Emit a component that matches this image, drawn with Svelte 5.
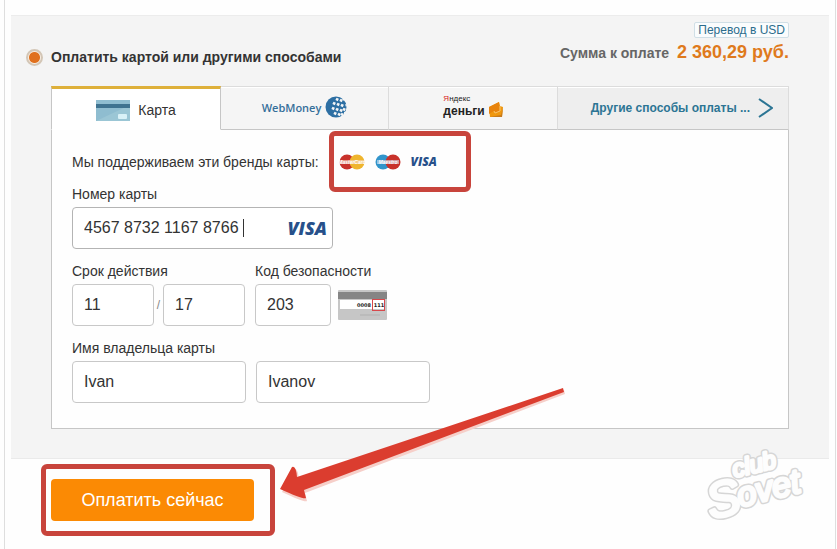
<script lang="ts">
  let method = 'card';
  let cardNumber = '4567 8732 1167 8766';
  let month = '11';
  let year = '17';
  let code = '203';
  let firstName = 'Ivan';
  let lastName = 'Ivanov';

  // openings in the WebMoney globe
  const globeDots = [
    [12, 3], [16, 4], [9, 7], [13, 8], [17, 9], [8, 12], [12, 13],
    [16, 14], [19, 13], [10, 17], [14, 18], [17, 18],
  ];
</script>

<div class="page">
  <main class="panel">
    <header class="summary">
      <label class="choice">
        <input type="radio" name="payment" value="other" checked />
        <span>Оплатить картой или другими способами</span>
      </label>

      <div class="total">
        <a class="currency" href="#usd">Перевод в USD</a>
        <p class="sum">Сумма к оплате <strong>2 360,29 руб.</strong></p>
      </div>
    </header>

    <section class="methods">
      <div class="tabs" role="tablist">
        <button class="tab" class:active={method === 'card'} role="tab" aria-selected={method === 'card'} on:click={() => (method = 'card')}>
          <svg class="card-icon" viewBox="0 0 34 21" aria-hidden="true">
            <rect width="34" height="21" fill="#8fbdd0" />
            <path d="M0 21 L34 5 V21 Z" fill="#a3cbd9" opacity="0.6" />
            <rect y="4" width="34" height="4" fill="#3f7390" />
            <rect x="22" y="14" width="9" height="5" rx="1" fill="#d9f1f7" />
          </svg>
          <span>Карта</span>
        </button>

        <button class="tab webmoney" class:active={method === 'webmoney'} role="tab" aria-selected={method === 'webmoney'} on:click={() => (method = 'webmoney')}>
          <span>WebMoney</span>
          <svg class="globe" viewBox="0 0 22 22" aria-hidden="true">
            <circle cx="11" cy="11" r="10.5" fill="#2d6fa3" />
            <g fill="#f4f5f6">
              {#each globeDots as [x, y]}
                <rect x={x - 1} y={y - 1} width="2.6" height="2.6" transform="rotate(25 {x} {y})" />
              {/each}
            </g>
            <path d="M17 3 L20 2 L19 5 Z M20 8 L22 9 L21 11 Z M19 16 L22 15 L19 20 Z" fill="#f5f5f5" />
          </svg>
        </button>

        <button class="tab yandex" class:active={method === 'yandex'} role="tab" aria-selected={method === 'yandex'} on:click={() => (method = 'yandex')}>
          <span class="yandex-name">
            <small><i>Я</i>ндекс</small>
            <b>деньги</b>
          </span>
          <svg class="wallet" viewBox="0 0 14 16" aria-hidden="true">
            <path d="M0 5 L10 0 L11 4 L14 5 L13 15 L1 15 Z" fill="#f0980f" />
            <path d="M0 5 L10 0 L11 9 L6 11 L5 9 L0 12 Z" fill="#e8830c" />
            <path d="M5 9 L6 11 L11 9 V4" fill="none" stroke="#f8c46c" stroke-width="1" />
            <path d="M1 15 L13 15 L14 5 L12 13 Z" fill="#c77a1c" />
          </svg>
        </button>

        <button class="tab others" class:active={method === 'others'} role="tab" aria-selected={method === 'others'} on:click={() => (method = 'others')}>
          <span>Другие способы оплаты ...</span>
          <svg class="chevron" viewBox="0 0 15 20" aria-hidden="true">
            <path d="M1 1 L14 10 L1 19" fill="none" stroke="#2c7594" stroke-width="2" />
          </svg>
        </button>
      </div>

      <form id="card-form" class="card-form" on:submit|preventDefault>
        <div class="brands">
          <span>Мы поддерживаем эти бренды карты:</span>
          <div class="logos">
            <svg class="circles" viewBox="0 0 26 16" role="img" aria-label="MasterCard">
              <circle cx="8" cy="8" r="7.5" fill="#c8322b" />
              <circle cx="18" cy="8" r="7.5" fill="#efb52e" />
              <path d="M1 8 H25" stroke="#f7d9c4" stroke-width="4" opacity="0.6" />
              <text x="13" y="10" text-anchor="middle" fill="#fff">MasterCard</text>
            </svg>
            <svg class="circles" viewBox="0 0 26 16" role="img" aria-label="Maestro">
              <circle cx="8" cy="8" r="7.5" fill="#3295cb" />
              <circle cx="18" cy="8" r="7.5" fill="#c8322b" />
              <path d="M2 8 H24" stroke="#d9dfee" stroke-width="4" opacity="0.6" />
              <text x="13" y="10" text-anchor="middle" fill="#fff">Maestro</text>
            </svg>
            <span class="visa small">VISA</span>
            <span class="highlight" aria-hidden="true"></span>
          </div>
        </div>

        <div class="field">
          <label for="number">Номер карты</label>
          <div class="number-box">
            <input id="number" bind:value={cardNumber} />
            <span class="caret"></span>
            <span class="visa">VISA</span>
          </div>
        </div>

        <div class="row">
          <div class="field">
            <label for="month">Срок действия</label>
            <div class="expiry">
              <input id="month" class="box" bind:value={month} />
              <span>/</span>
              <input class="box" aria-label="Год" bind:value={year} />
            </div>
          </div>
          <div class="field">
            <label for="code">Код безопасности</label>
            <div class="security">
              <input id="code" class="box" bind:value={code} />
              <svg class="card-back" viewBox="0 0 49 30" aria-hidden="true">
                <rect width="49" height="30" rx="1" fill="#c6c6c6" />
                <rect y="2" width="49" height="7" fill="#858585" />
                <rect x="2" y="10" width="45" height="9" fill="#fff" />
                <text x="33" y="17" text-anchor="end">0008</text>
                <text x="41" y="17" text-anchor="middle">111</text>
                <rect x="34.5" y="9.5" width="12" height="11" fill="none" stroke="#d8484c" />
                <path d="M22 25 H42" stroke="#b0b0b0" />
              </svg>
            </div>
          </div>
        </div>

        <div class="field">
          <label for="first-name">Имя владельца карты</label>
          <div class="row">
            <input id="first-name" class="box name" bind:value={firstName} />
            <input class="box name" aria-label="Фамилия" bind:value={lastName} />
          </div>
        </div>
      </form>
    </section>
  </main>

  <footer class="actions">
    <div class="pay-area">
      <button class="pay" type="submit" form="card-form">Оплатить сейчас</button>
      <svg class="arrow" viewBox="0 0 288 114" aria-hidden="true">
        <path d="M1 103 L14 80 Q17 80 18 91 L283 1 L284 5 L24 104 L26 112 Q24 114 1 103 Z" fill="#f6cfc9" transform="translate(1 2)" />
        <path d="M0 102 L12 80 Q16 78 17 90 L283 1 L284 5 L24 103 L26 111 Q24 113 0 102 Z" fill="#db3d2f" />
      </svg>
    </div>
  </footer>

  <svg class="watermark" viewBox="0 0 110 80" aria-hidden="true">
    <g transform="rotate(-14 55 40)">
      <g class="edge">
        <text x="4" y="67" class="big">S</text>
        <text x="35" y="62" class="mid">ovet</text>
        <text x="37" y="32" class="top">club</text>
      </g>
      <g class="fill">
        <text x="4" y="67" class="big">S</text>
        <text x="35" y="62" class="mid">ovet</text>
        <text x="37" y="32" class="top">club</text>
      </g>
    </g>
  </svg>
</div>

<style>
  :global(body) {
    margin: 0;
    background: #fefefe;
  }

  .page {
    position: relative;
    box-sizing: border-box;
    min-height: 100vh;
    margin: 0 1px 0 4px;
    padding: 15px 6px 12px;
    border-left: 1px solid #dedede;
    border-right: 1px solid #dedede;
    font-family: "Liberation Sans", Arial, sans-serif;
    font-size: 14px;
    line-height: 18px;
    color: #333;
  }

  button, input {
    font-family: inherit;
    color: inherit;
  }

  .panel {
    padding: 6px 40px 29px;
    border-top: 1px solid #ececec;
    border-bottom: 1px solid #eaeaea;
    background: #f4f4f4;
  }

  .summary {
    display: flex;
    justify-content: space-between;
    height: 64px;
  }

  .choice {
    display: flex;
    align-items: center;
    gap: 8px;
    height: 18px;
    margin: 26px 0 0 -25px;
    font-weight: bold;
    white-space: nowrap;
  }

  .choice input {
    appearance: none;
    box-sizing: border-box;
    width: 17px;
    height: 17px;
    margin: 0;
    border: 2px solid #d3c6b6;
    border-radius: 50%;
    background: radial-gradient(circle, #e0701e 0 5px, #f9eee2 6px);
  }

  .total {
    display: flex;
    flex-direction: column;
    align-items: flex-end;
  }

  .currency {
    padding: 0 3px;
    border: 1px solid #d0dfe6;
    border-radius: 2px;
    background: #fafcfd;
    font-size: 12px;
    line-height: 14px;
    color: #2b6c8c;
    text-decoration: none;
  }

  .sum {
    margin: 4px 0 0;
    font-weight: bold;
    line-height: 20px;
    color: #666;
    white-space: nowrap;
  }

  .sum strong {
    margin-left: 4px;
    font-size: 18px;
    color: #df7a1c;
  }

  .tabs {
    display: grid;
    grid-template-columns: 170fr 168fr 169fr 231fr;
    height: 44px;
  }

  .tab {
    display: flex;
    align-items: center;
    justify-content: center;
    padding: 0;
    border: 0;
    border-top: 1px solid #dcdcdc;
    border-right: 1px solid #dcdcdc;
    border-bottom: 1px solid #c6c6c6;
    background: #f5f5f5;
    box-shadow: inset 0 1px #fff;
    font-size: 14px;
    cursor: pointer;
  }

  .tab.active {
    gap: 8px;
    padding: 2px 0 0;
    border-top: 3px solid #deb03a;
    border-left: 1px solid #c6c6c6;
    border-right-color: #c6c6c6;
    border-bottom-color: #fff;
    background: #fff;
    box-shadow: none;
  }

  .card-icon {
    width: 34px;
    height: 21px;
  }

  .webmoney {
    gap: 4px;
    padding-bottom: 2px;
    font-family: "Open Sans", sans-serif;
    font-size: 11px;
    font-weight: 600;
    color: #356f9a;
  }

  .globe {
    width: 22px;
    height: 22px;
  }

  .yandex {
    gap: 4px;
    padding-bottom: 4px;
  }

  .yandex-name {
    display: flex;
    flex-direction: column;
    text-align: left;
    color: #222;
  }

  .yandex-name small {
    font-size: 8px;
    line-height: 10px;
  }

  .yandex-name i {
    font-style: normal;
    color: #d8221c;
  }

  .yandex-name b {
    font-size: 12px;
    line-height: 15px;
  }

  .wallet {
    width: 14px;
    height: 16px;
    margin-top: 8px;
  }

  .others {
    justify-content: flex-end;
    gap: 8px;
    padding-right: 15px;
    background: #eee;
    font-size: 12px;
    font-weight: bold;
    color: #2c7594;
  }

  .chevron {
    width: 15px;
    height: 20px;
  }

  .card-form {
    display: flex;
    flex-direction: column;
    align-items: flex-start;
    gap: 13px;
    padding: 22px 20px 25px;
    border: 1px solid #c6c6c6;
    border-top: 0;
    background: #fefefe;
  }

  .brands {
    display: flex;
    align-items: center;
    gap: 20px;
    height: 20px;
    white-space: nowrap;
  }

  .logos {
    position: relative;
    display: flex;
    align-items: center;
    gap: 10px;
    width: 132px;
    height: 18px;
  }

  .circles {
    width: 26px;
    height: 16px;
  }

  .circles text {
    font-size: 5px;
    font-weight: bold;
    font-style: italic;
  }

  .visa {
    font-family: "Open Sans", sans-serif;
    font-size: 18px;
    font-weight: 800;
    font-style: italic;
    color: #27508a;
  }

  .visa.small {
    font-size: 12px;
  }

  .highlight {
    position: absolute;
    inset: -22px 0 -21px -10px;
    border: 5px solid #c8443c;
    border-radius: 6px;
  }

  .field {
    display: flex;
    flex-direction: column;
    gap: 4px;
  }

  .row {
    display: flex;
    gap: 10px;
  }

  .number-box,
  .box {
    box-sizing: border-box;
    height: 42px;
    border: 1px solid #c8c8c8;
    border-radius: 4px;
    background: #fff;
    font-size: 16px;
  }

  .number-box {
    display: flex;
    align-items: center;
    width: 261px;
    padding: 0 5px 0 11px;
    border-color: #b4b4b4;
  }

  .number-box input {
    field-sizing: content;
    padding: 0;
    border: 0;
    outline: 0;
    background: none;
    font-size: 16px;
  }

  .caret {
    width: 1px;
    height: 18px;
    margin: 0 auto 0 4px;
    background: #333;
  }

  .box {
    width: 82px;
    padding: 0 11px;
  }

  .expiry,
  .security {
    display: flex;
    align-items: center;
  }

  .expiry span {
    width: 9px;
    font-size: 12px;
    text-align: center;
    color: #888;
  }

  .security {
    gap: 7px;
  }

  .security .box {
    width: 76px;
  }

  .card-back {
    width: 49px;
    height: 30px;
  }

  .card-back text {
    font-family: "DejaVu Sans", sans-serif;
    font-size: 5px;
    font-weight: bold;
    fill: #222;
  }

  .box.name {
    width: 174px;
  }

  .actions {
    display: flex;
    padding: 5px 30px 0;
  }

  .pay-area {
    position: relative;
    padding: 10px 16px 10px 5px;
    border: 5px solid #c8443c;
    border-radius: 6px;
  }

  .pay {
    display: block;
    width: 203px;
    height: 42px;
    padding: 0;
    border: 0;
    border-radius: 4px;
    background: #fb8a04;
    font-size: 18px;
    color: #fff;
    cursor: pointer;
  }

  .arrow {
    position: absolute;
    left: 234px;
    bottom: 30px;
    width: 288px;
    height: 114px;
    overflow: visible;
    pointer-events: none;
  }

  .watermark {
    position: absolute;
    right: 26px;
    bottom: 28px;
    width: 110px;
    height: 80px;
    overflow: visible;
    font-family: "Liberation Sans", Arial, sans-serif;
    font-style: italic;
    pointer-events: none;
  }

  .watermark text {
    stroke-linejoin: round;
  }

  .edge {
    fill: #d6d6d6;
    stroke: #d6d6d6;
    stroke-width: 6px;
  }

  .fill {
    fill: #fdfdfd;
    stroke: #fdfdfd;
    stroke-width: 3px;
  }

  .big {
    font-size: 50px;
  }

  .mid {
    font-size: 34px;
  }

  .top {
    font-size: 24px;
  }
</style>
